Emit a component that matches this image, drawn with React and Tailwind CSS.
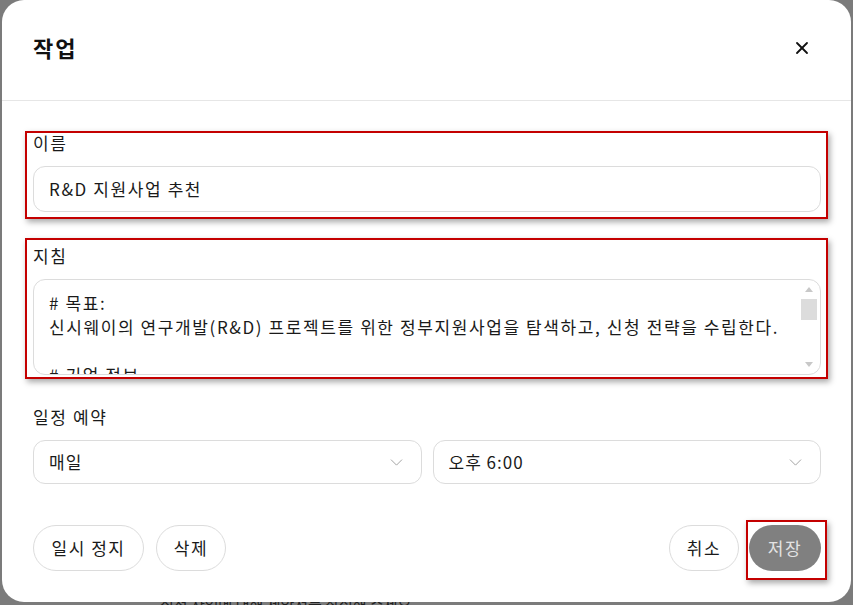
import React from 'react';
import { ChevronDown, X } from 'lucide-react';

const font = "font-['Noto_Sans_CJK_KR','Noto_Sans',sans-serif]";

const Select = ({ value }) => (
    <div className="flex-1 h-[44px] rounded-xl border border-[#dcdcdc] bg-white flex items-center justify-between pl-[15px] pr-[14px]">
        <span className="text-[17px] tracking-[1px] text-[#1a1a1a]">{value}</span>
        <ChevronDown size={21} strokeWidth={1.1} className="text-[#a0a0a0]" />
    </div>
);

const PillButton = ({ children, className = '' }) => (
    <button className={`h-[46px] rounded-full border border-[#dcdcdc] bg-white text-[17px] tracking-[1.5px] text-[#1a1a1a] ${className}`}>
        {children}
    </button>
);

const RedBox = ({ className }) => (
    <div className={`pointer-events-none absolute border-2 border-[#c40000] shadow-[2px_3px_6px_rgba(0,0,0,0.35)] ${className}`} />
);

export default function App() {
    return (
        <div className={`w-full h-[605px] bg-[#7b7b7b] px-[2px] overflow-hidden ${font}`}>
            <div className="h-[602px] bg-white rounded-[22px] flex flex-col">
                {/* 헤더 */}
                <div className="h-[101px] shrink-0 border-b border-[#e6e6e6] flex items-center justify-between pl-[31px] pr-[39px] pb-[5px]">
                    <h1 className="text-[22px] tracking-[2px] font-semibold text-[#111]">작업</h1>
                    <X size={20} strokeWidth={2.2} className="text-[#111]" />
                </div>

                <div className="flex flex-col pl-[31px] pr-[30px] pt-[32px] text-[17px] tracking-[1.6px]">
                    {/* 이름 */}
                    <div className="relative">
                        <RedBox className="-left-2 -right-[7px] -top-[2px] -bottom-[7px]" />
                        <div className="leading-5 text-[#1a1a1a]">이름</div>
                        <div className="mt-[13px] h-[46px] rounded-xl border border-[#dcdcdc] flex items-center px-[15px] text-[#1a1a1a]">
                            R&amp;D 지원사업 추천
                        </div>
                    </div>

                    {/* 지침 */}
                    <div className="relative mt-[34px]">
                        <RedBox className="-left-2 -right-[7px] -top-[8px] -bottom-[4px]" />
                        <div className="leading-5 text-[#1a1a1a]">지침</div>
                        <div className="relative mt-[13px] h-[96px] rounded-xl border border-[#dcdcdc] overflow-hidden">
                            <div className="pl-[15px] pr-[24px] pt-[11px] leading-6 text-[#1a1a1a] whitespace-pre">
                                {'# 목표:\n신시웨이의 연구개발(R&D) 프로젝트를 위한 정부지원사업을 탐색하고, 신청 전략을 수립한다.\n\n# 기업 정보'}
                            </div>
                            {/* 스크롤바 */}
                            <div className="absolute right-[3px] top-[4px] bottom-[4px] w-[16px] flex flex-col items-center">
                                <div className="mt-[3px] w-0 h-0 border-l-[4px] border-r-[4px] border-b-[5px] border-l-transparent border-r-transparent border-b-[#c8c8c8]" />
                                <div className="mt-[7px] w-[16px] h-[21px] bg-[#dcdcdc]" />
                                <div className="flex-1" />
                                <div className="mb-[3px] w-0 h-0 border-l-[4px] border-r-[4px] border-t-[5px] border-l-transparent border-r-transparent border-t-[#c8c8c8]" />
                            </div>
                        </div>
                    </div>

                    {/* 일정 예약 */}
                    <div className="mt-[32px] leading-5 text-[#1a1a1a]">일정 예약</div>
                    <div className="mt-[13px] flex gap-[11px]">
                        <Select value="매일" />
                        <Select value="오후 6:00" />
                    </div>

                    {/* 버튼 */}
                    <div className="mt-[41px] flex items-center justify-between">
                        <div className="flex gap-[12px]">
                            <PillButton className="w-[111px]">일시 정지</PillButton>
                            <PillButton className="w-[70px]">삭제</PillButton>
                        </div>
                        <div className="flex gap-[10px]">
                            <PillButton className="w-[70px]">취소</PillButton>
                            <div className="relative">
                                <RedBox className="-left-[3px] -right-[6px] -top-[5px] -bottom-[9px]" />
                                <button className="h-[46px] w-[72px] rounded-full bg-[#808080] text-[17px] tracking-[1.5px] text-[#e4e4e4]">
                                    저장
                                </button>
                            </div>
                        </div>
                    </div>
                </div>
            </div>
            <div className="h-[3px] overflow-hidden pl-[158px]">
                <div className="-mt-[8px] text-[15px] leading-5 text-[#222]">신청 사업에 대해 제안서를 작성해 주세요.</div>
            </div>
        </div>
    );
}
